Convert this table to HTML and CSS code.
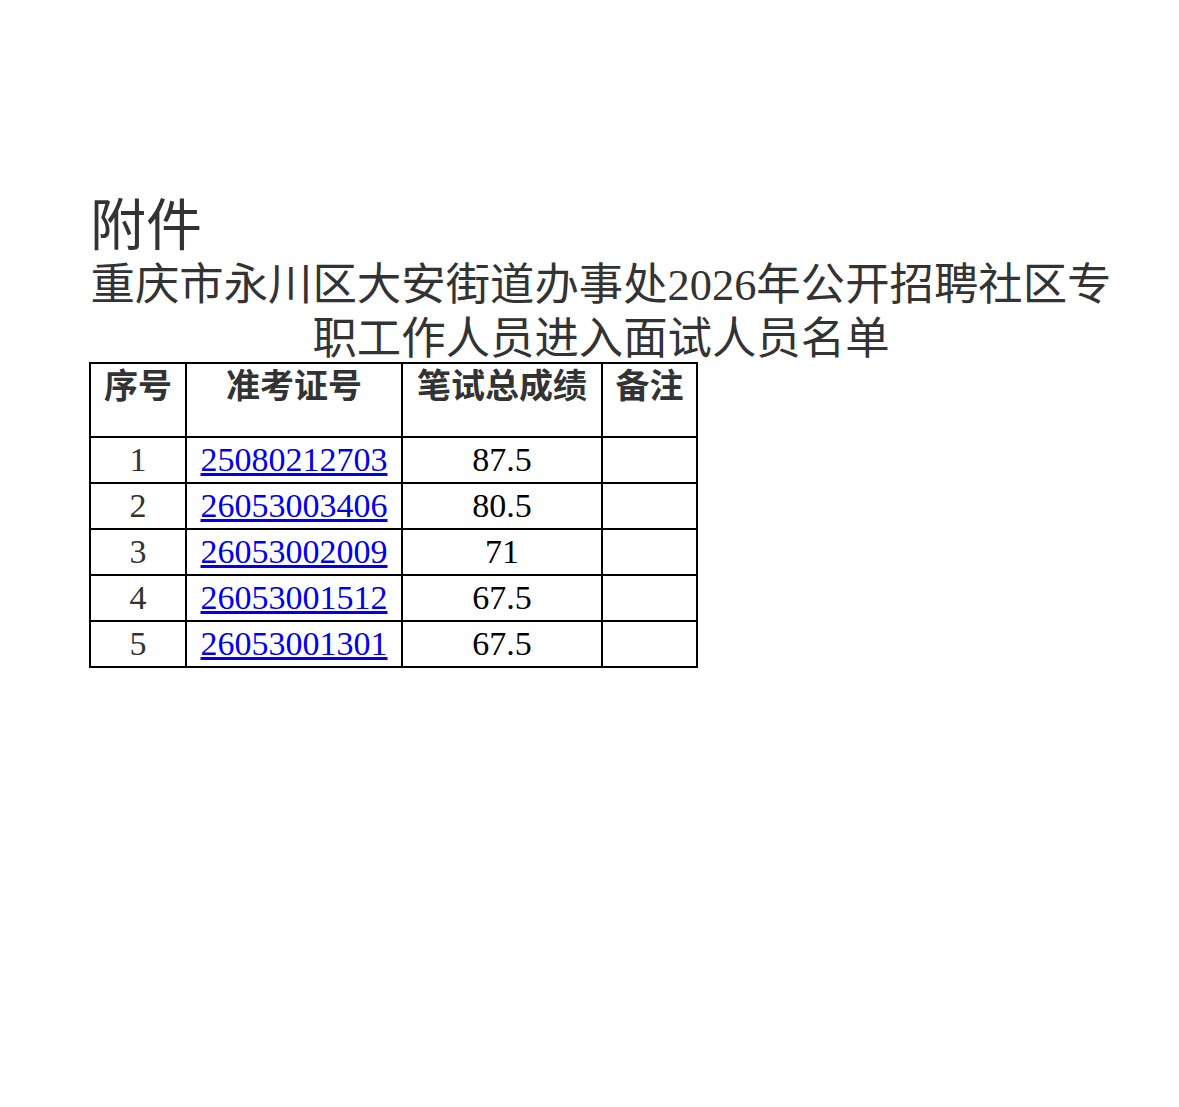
FILE: index.html
```html
<!DOCTYPE html>
<html lang="zh-CN">
<head>
<meta charset="utf-8">
<title>附件</title>
<link rel="stylesheet" href="styles.css">
</head>
<body>
<div class="page">
  <div class="attach">附件</div>
  <h1 class="title"><span class="line1">重庆市永川区大安街道办事处2026年公开招聘社区专</span><span class="line2">职工作人员进入面试人员名单</span></h1>
  <table class="list">
    <colgroup>
      <col class="c1"><col class="c2"><col class="c3"><col class="c4">
    </colgroup>
    <thead>
      <tr><th>序号</th><th>准考证号</th><th>笔试总成绩</th><th>备注</th></tr>
    </thead>
    <tbody>
      <tr><td class="no">1</td><td><a href="#">25080212703</a></td><td class="score">87.5</td><td></td></tr>
      <tr><td class="no">2</td><td><a href="#">26053003406</a></td><td class="score">80.5</td><td></td></tr>
      <tr><td class="no">3</td><td><a href="#">26053002009</a></td><td class="score">71</td><td></td></tr>
      <tr><td class="no">4</td><td><a href="#">26053001512</a></td><td class="score">67.5</td><td></td></tr>
      <tr><td class="no">5</td><td><a href="#">26053001301</a></td><td class="score">67.5</td><td></td></tr>
    </tbody>
  </table>
</div>
</body>
</html>
```

FILE: styles.css
```css
html, body {
  margin: 0;
  padding: 0;
  background: #fff;
}
.page {
  padding: 194px 0 0 89px;
  font-family: "Liberation Serif", "Noto Sans CJK SC", serif;
  color: #333;
}
.attach {
  font-size: 56px;
  line-height: 64px;
  padding-left: 1px;
}
.title {
  margin: 0;
  width: 1024px;
  font-weight: normal;
  font-size: 44.4px;
  text-align: center;
  color: #333;
}
.title .line1 {
  display: block;
  line-height: 54px;
  white-space: nowrap;
}
.title .line2 {
  display: block;
  line-height: 46px;
  padding-top: 4px;
}
.list {
  border-collapse: collapse;
  margin-top: 0;
  table-layout: fixed;
  width: 607px;
}
.c1 { width: 96px; }
.c2 { width: 216px; }
.c3 { width: 200px; }
.c4 { width: 95px; }
.list th, .list td {
  border: 2px solid #000;
  padding: 0;
  text-align: center;
}
.list th {
  height: 72px;
  vertical-align: top;
  font-family: "Noto Sans CJK SC", sans-serif;
  font-weight: bold;
  font-size: 34px;
  line-height: 40px;
  color: #333;
}
.list td {
  height: 44px;
  font-size: 34px;
  line-height: 44px;
  vertical-align: middle;
}
.list td.no { color: #333; }
.list td.score { color: #000; }
.list a {
  color: #0000ee;
  text-decoration: underline;
}
```
